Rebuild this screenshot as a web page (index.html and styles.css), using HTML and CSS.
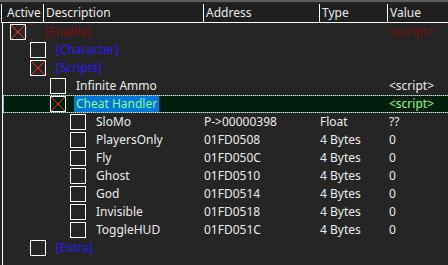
FILE: index.html
```html
<!DOCTYPE html>
<html lang="en">
  <head>
    <meta charset="UTF-8" />
    <meta name="viewport" content="width=device-width, initial-scale=1.0" />
    <title>Cheat Table</title>
    <link rel="stylesheet" href="styles.css">
  </head>
  <body>
    <div class="topline"></div>

    <div class="header">
      <div class="col col-active">Active</div>
      <div class="col col-desc">Description</div>
      <div class="col col-addr">Address</div>
      <div class="col col-type">Type</div>
      <div class="col col-value">Value</div>
    </div>

    <div class="list">
      <div class="row">
        <div class="desc lvl-0"><span class="check checked"></span><span class="label group-red">[Enable]</span></div>
        <div class="addr"></div>
        <div class="type"></div>
        <div class="value script-red">&lt;script&gt;</div>
      </div>
      <div class="row">
        <div class="desc lvl-1"><span class="check"></span><span class="label group-blue">[Character]</span></div>
      </div>
      <div class="row">
        <div class="desc lvl-1"><span class="check checked"></span><span class="label group-blue">[Scripts]</span></div>
      </div>
      <div class="row">
        <div class="desc lvl-2"><span class="check"></span><span class="label">Infinite Ammo</span></div>
        <div class="addr"></div>
        <div class="type"></div>
        <div class="value">&lt;script&gt;</div>
      </div>
      <div class="row selected">
        <div class="desc lvl-2"><span class="check checked"></span><span class="label">Cheat Handler</span></div>
        <div class="addr"></div>
        <div class="type"></div>
        <div class="value">&lt;script&gt;</div>
      </div>
      <div class="row">
        <div class="desc lvl-3"><span class="check"></span><span class="label">SloMo</span></div>
        <div class="addr">P-&gt;00000398</div>
        <div class="type">Float</div>
        <div class="value">??</div>
      </div>
      <div class="row">
        <div class="desc lvl-3"><span class="check"></span><span class="label">PlayersOnly</span></div>
        <div class="addr">01FD0508</div>
        <div class="type">4 Bytes</div>
        <div class="value">0</div>
      </div>
      <div class="row">
        <div class="desc lvl-3"><span class="check"></span><span class="label">Fly</span></div>
        <div class="addr">01FD050C</div>
        <div class="type">4 Bytes</div>
        <div class="value">0</div>
      </div>
      <div class="row">
        <div class="desc lvl-3"><span class="check"></span><span class="label">Ghost</span></div>
        <div class="addr">01FD0510</div>
        <div class="type">4 Bytes</div>
        <div class="value">0</div>
      </div>
      <div class="row">
        <div class="desc lvl-3"><span class="check"></span><span class="label">God</span></div>
        <div class="addr">01FD0514</div>
        <div class="type">4 Bytes</div>
        <div class="value">0</div>
      </div>
      <div class="row">
        <div class="desc lvl-3"><span class="check"></span><span class="label">Invisible</span></div>
        <div class="addr">01FD0518</div>
        <div class="type">4 Bytes</div>
        <div class="value">0</div>
      </div>
      <div class="row">
        <div class="desc lvl-3"><span class="check"></span><span class="label">ToggleHUD</span></div>
        <div class="addr">01FD051C</div>
        <div class="type">4 Bytes</div>
        <div class="value">0</div>
      </div>
      <div class="row">
        <div class="desc lvl-1"><span class="check"></span><span class="label group-blue">[Extra]</span></div>
      </div>
    </div>
  </body>
</html>
```

FILE: styles.css
```css
html,
body {
  height: 100%;
}

body {
  margin: 0;
  display: flex;
  flex-direction: column;
  background-color: #252525;
  color: #ececec;
  font-family: "Noto Sans", "Open Sans", sans-serif;
  font-size: 12px;
  overflow: hidden;
}

.topline {
  height: 2px;
  background-color: #5e5e5e;
  margin-bottom: 2px;
}

/* column header */
.header {
  display: flex;
  height: 18px;
  line-height: 18px;
  border-bottom: 1px solid #ffffff;
  border-left: 1px solid #ffffff;
  margin-left: 1px;
}

.col {
  background-color: #1f1f1f;
  border-right: 1px solid #ffffff;
  padding-left: 2px;
  box-sizing: border-box;
  white-space: nowrap;
}

.col-active {
  width: 42px;
  padding-left: 5px;
}

.col-desc {
  width: 160px;
}

.col-addr {
  width: 116px;
}

.col-type {
  width: 68px;
}

.col-value {
  flex: 1;
  border-right: none;
}

/* tree rows */
.list {
  flex: 1;
  margin-left: 2px;
  border-left: 1px solid #ffffff;
}

.row {
  display: flex;
  height: 18px;
  line-height: 18px;
  white-space: nowrap;
}

.desc {
  display: flex;
  align-items: center;
  width: 201px;
  box-sizing: border-box;
  flex-shrink: 0;
}

.addr {
  width: 116px;
  flex-shrink: 0;
}

.type {
  width: 69px;
  flex-shrink: 0;
}

.value {
  flex: 1;
}

.lvl-0 {
  padding-left: 7px;
}

.lvl-0 .label {
  margin-left: 19px;
}

.lvl-1 {
  padding-left: 27px;
}

.lvl-2 {
  padding-left: 47px;
}

.lvl-3 {
  padding-left: 67px;
}

.label {
  margin-left: 10px;
}

.check {
  width: 16px;
  height: 16px;
  border: 1px solid #ffffff;
  box-sizing: border-box;
  flex-shrink: 0;
}

.check.checked {
  background:
    linear-gradient(to top right, transparent calc(50% - 0.6px), #ff2a2a 50%, transparent calc(50% + 0.6px)),
    linear-gradient(to bottom right, transparent calc(50% - 0.6px), #ff2a2a 50%, transparent calc(50% + 0.6px));
}

.group-red,
.script-red {
  color: #7d0f0f;
}

.group-blue {
  color: #2a1aff;
}

/* focused row with dotted focus rectangle */
.row.selected {
  background:
    repeating-linear-gradient(90deg, #e8ec5a 0 1px, #3d7bff 1px 2px) top / 100% 1px no-repeat,
    repeating-linear-gradient(90deg, #e8ec5a 0 1px, #3d7bff 1px 2px) bottom / 100% 1px no-repeat,
    repeating-linear-gradient(180deg, #e8ec5a 0 1px, #3d7bff 1px 2px) left / 1px 100% no-repeat,
    #001f0c;
  color: #8cff8c;
}

.row.selected .label {
  background-color: #0078d7;
  padding: 0 2px;
  margin-left: 8px;
  line-height: 16px;
}
```
